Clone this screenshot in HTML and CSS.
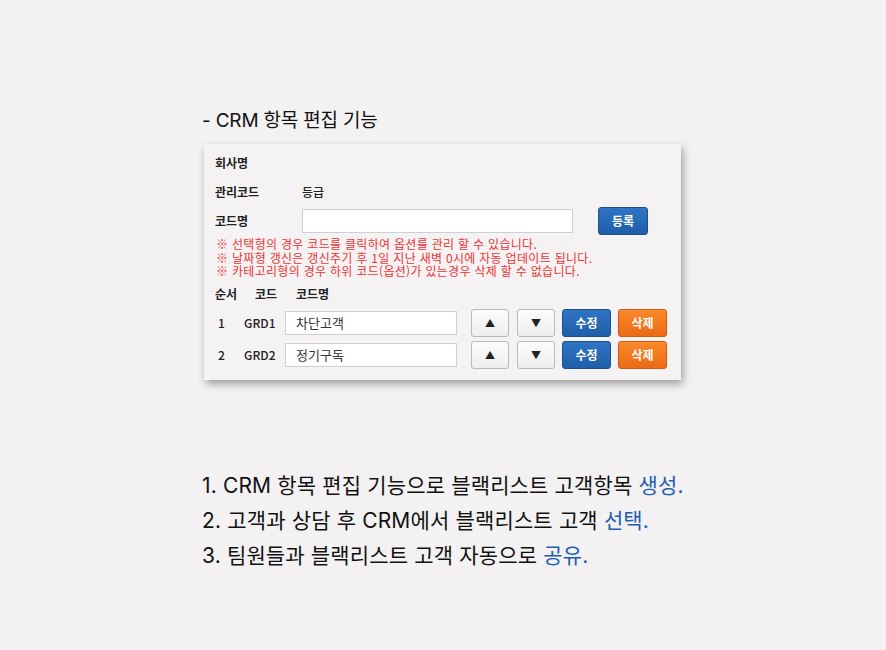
FILE: index.html
```html
<!DOCTYPE html>
<html lang="ko">
<head>
    <meta charset="UTF-8">
    <title>CRM 항목 편집</title>
    <link rel="stylesheet" href="styles.css">
</head>
<body>
    <div class="page">
        <h2 class="section-title">- CRM 항목 편집 기능</h2>

        <div class="editor">
            <div class="field-row">
                <span class="label">회사명</span>
            </div>
            <div class="field-row">
                <span class="label">관리코드</span>
                <span class="value">등급</span>
            </div>
            <div class="field-row">
                <span class="label">코드명</span>
                <input type="text" class="text-input name-input">
                <button class="btn btn-blue btn-register">등록</button>
            </div>

            <ul class="notes">
                <li>※ 선택형의 경우 코드를 클릭하여 옵션를 관리 할 수 있습니다.</li>
                <li>※ 날짜형 갱신은 갱신주기 후 1일 지난 새벽 0시에 자동 업데이트 됩니다.</li>
                <li>※ 카테고리형의 경우 하위 코드(옵션)가 있는경우 삭제 할 수 없습니다.</li>
            </ul>

            <div class="list-head">
                <span class="col-order">순서</span>
                <span class="col-code">코드</span>
                <span>코드명</span>
            </div>

            <div class="code-row">
                <span class="col-num">1</span>
                <span class="col-grd">GRD1</span>
                <input type="text" class="text-input row-input" value="차단고객">
                <button class="btn btn-gray">&#9650;</button>
                <button class="btn btn-gray">&#9660;</button>
                <button class="btn btn-blue">수정</button>
                <button class="btn btn-orange">삭제</button>
            </div>
            <div class="code-row">
                <span class="col-num">2</span>
                <span class="col-grd">GRD2</span>
                <input type="text" class="text-input row-input" value="정기구독">
                <button class="btn btn-gray">&#9650;</button>
                <button class="btn btn-gray">&#9660;</button>
                <button class="btn btn-blue">수정</button>
                <button class="btn btn-orange">삭제</button>
            </div>
        </div>

        <ol class="steps">
            <li>1. CRM 항목 편집 기능으로 블랙리스트 고객항목 <em>생성.</em></li>
            <li>2. 고객과 상담 후 CRM에서 블랙리스트 고객 <em>선택.</em></li>
            <li>3. 팀원들과 블랙리스트 고객 자동으로 <em>공유.</em></li>
        </ol>
    </div>
</body>
</html>
```

FILE: styles.css
```css
body {
    margin: 0;
    background-color: #f3f1f2;
    font-family: 'Inter', 'Noto Sans CJK KR', sans-serif;
    color: #111;
}

.page {
    padding: 107px 0 0 202px;
}

.section-title {
    margin: 0;
    font-size: 19px;
    font-weight: 400;
    line-height: 28px;
    letter-spacing: -0.2px;
}

.editor {
    width: 477px;
    height: 236px;
    box-sizing: border-box;
    margin: 9px 0 0 2px;
    padding: 4px 0 0 11px;
    background-color: #f4f2f3;
    box-shadow: 2px 4px 8px rgba(0, 0, 0, 0.35);
    font-family: 'Noto Sans CJK KR', sans-serif;
    font-size: 12px;
    color: #222;
}

.field-row {
    display: flex;
    align-items: center;
    height: 29px;
}

.label {
    width: 87px;
    font-weight: 700;
}

.value {
    font-weight: 500;
}

.text-input {
    box-sizing: border-box;
    border: 1px solid #cfcfcf;
    background: #fff;
    font-family: 'Noto Sans CJK KR', sans-serif;
    font-size: 12px;
    color: #333;
    padding: 0 10px;
    outline: none;
}

.name-input {
    width: 271px;
    height: 24px;
}

.btn {
    box-sizing: border-box;
    height: 28px;
    border-radius: 3px;
    font-family: 'Noto Sans CJK KR', sans-serif;
    font-size: 12px;
    font-weight: 700;
    padding: 0;
    cursor: pointer;
}

.btn-blue {
    width: 49px;
    color: #fff;
    border: 1px solid #1d4f8c;
    background: linear-gradient(#2f75c3, #1f5ea8);
}

.btn-orange {
    width: 49px;
    color: #fff;
    border: 1px solid #d45a10;
    background: linear-gradient(#f98a2e, #ec6a14);
}

.btn-gray {
    width: 38px;
    font-size: 10px;
    color: #222;
    border: 1px solid #b9b9b9;
    background: linear-gradient(#fcfcfc, #eeeeee);
}

.btn-register {
    width: 50px;
    margin-left: 25px;
}

.notes {
    list-style: none;
    margin: 2px 0 0 1px;
    padding: 0;
    font-size: 12px;
    line-height: 13.5px;
    color: #ee3434;
    letter-spacing: 0.3px;
    white-space: nowrap;
}

.list-head {
    display: flex;
    margin-top: 6px;
    height: 20px;
    align-items: center;
    font-weight: 700;
}

.col-order {
    width: 40px;
}

.col-code {
    width: 41px;
}

.code-row {
    display: flex;
    align-items: center;
    gap: 7px;
    margin-top: 5px;
    height: 28px;
}

.code-row + .code-row {
    margin-top: 4px;
}

.code-row .btn-gray + .btn-gray {
    margin-left: 1px;
}

.col-num {
    width: 26px;
    padding-left: 3px;
    margin-right: -7px;
    font-weight: 500;
}

.col-grd {
    width: 41px;
    margin-right: -7px;
    font-weight: 500;
}

.row-input {
    width: 172px;
    height: 24px;
    margin-right: 7px;
    font-size: 13px;
}

.steps {
    list-style: none;
    margin: 88px 0 0 0;
    padding: 0;
    font-size: 21px;
    line-height: 35px;
    letter-spacing: 0.15px;
}

.steps em {
    font-style: normal;
    color: #1f5faf;
}
```
